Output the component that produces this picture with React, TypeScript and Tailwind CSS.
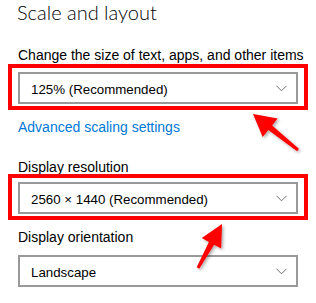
import React from "react";

function Chevron() {
  return (
    <svg width="11" height="7" viewBox="0 0 11 7" className="shrink-0">
      <path d="M0.5 0.8 L5.5 5.8 L10.5 0.8" fill="none" stroke="#707070" strokeWidth="1" />
    </svg>
  );
}

function Combo({ text }: { text: string }) {
  return (
    <div className="h-[32px] w-[280px] border-2 border-[#999999] bg-white flex items-center justify-between pl-[11px] pr-[9px] pt-[4px]">
      <span className="text-[13.3px] leading-[20px] text-black whitespace-nowrap">{text}</span>
      <div className="-mt-[3px]">
        <Chevron />
      </div>
    </div>
  );
}

function RedBox({ children }: { children: React.ReactNode }) {
  return (
    <div className="ml-[8px] w-[300px] border-4 border-[#ff0000] pt-[4px] pb-[2px] pl-[6px]">
      {children}
    </div>
  );
}

export default function App() {
  return (
    <div
      className="relative w-[316px] h-[303px] bg-white overflow-hidden"
      style={{ fontFamily: '"Liberation Sans", Arial, sans-serif' }}
    >
      <div className="flex flex-col">
        <div
          className="pl-[17px] h-[24px] text-[20px] leading-[24px] font-light text-black whitespace-nowrap"
          style={{ fontFamily: 'Lato, "Liberation Sans", sans-serif' }}
        >
          Scale and layout
        </div>
        <div className="pl-[18px] mt-[22px] h-[18px] text-[14px] leading-[18px] text-black whitespace-nowrap">
          Change the size of text, apps, and other items
        </div>
        <RedBox>
          <Combo text="125% (Recommended)" />
        </RedBox>
        <div className="pl-[18px] mt-[7px] h-[20px] text-[14px] leading-[20px] text-[#0078d7] whitespace-nowrap">
          Advanced scaling settings
        </div>
        <div className="pl-[18px] mt-[21px] h-[18px] text-[14px] leading-[18px] text-black whitespace-nowrap">
          Display resolution
        </div>
        <div className="-mt-[2px]">
          <RedBox>
            <Combo text="2560 × 1440 (Recommended)" />
          </RedBox>
        </div>
        <div className="pl-[18px] mt-[7px] h-[20px] text-[14px] leading-[20px] text-black whitespace-nowrap">
          Display orientation
        </div>
        <div className="pl-[18px] mt-[8px]">
          <Combo text="Landscape" />
        </div>
      </div>

      <svg className="absolute inset-0 pointer-events-none" width="316" height="303" viewBox="0 0 316 303">
        <defs>
          <filter id="sh" x="-20%" y="-20%" width="140%" height="140%">
            <feDropShadow dx="1.5" dy="1.5" stdDeviation="1.5" floodColor="#000" floodOpacity="0.35" />
          </filter>
        </defs>
        <polygon
          filter="url(#sh)"
          fill="#ff0000"
          points="253,114 277.7,118.4 272.1,125.4 298.9,148.8 297.1,151.2 268.3,130.1 262.7,137.1"
        />
        <polygon
          filter="url(#sh)"
          fill="#ff0000"
          points="222,224 221.2,248.6 214.1,244.7 199.3,268.7 196.7,267.3 208.9,241.9 201.8,238"
        />
      </svg>
    </div>
  );
}
